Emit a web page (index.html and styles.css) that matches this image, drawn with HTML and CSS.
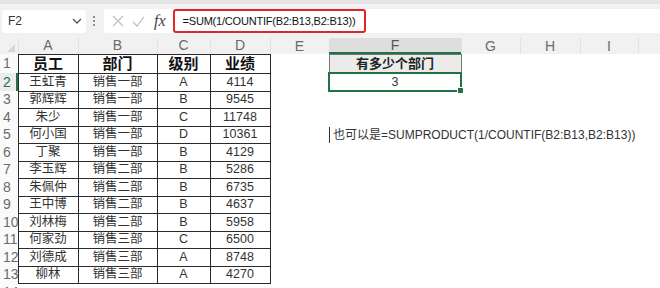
FILE: index.html
```html
<!DOCTYPE html>
<html lang="zh-CN">
<head>
  <meta charset="UTF-8" />
  <title>Sheet</title>
  <link rel="stylesheet" href="styles.css">
</head>
<body>

<div class="topstrip"></div>

<div class="bar">
  <div class="namebox">
    <span>F2</span>
    <svg class="chev" width="10" height="6" viewBox="0 0 10 6"><path d="M1 1 L5 5 L9 1" fill="none" stroke="#555" stroke-width="1.3"/></svg>
  </div>
  <svg class="dots" width="4" height="12" viewBox="0 0 4 12"><circle cx="2" cy="2" r="1.1" fill="#777"/><circle cx="2" cy="6" r="1.1" fill="#777"/><circle cx="2" cy="10" r="1.1" fill="#777"/></svg>
  <div class="formula">
    <svg class="ico" width="12" height="12" viewBox="0 0 12 12"><path d="M1 1 L11 11 M11 1 L1 11" stroke="#bdbdbd" stroke-width="1.2"/></svg>
    <svg class="ico" width="13" height="11" viewBox="0 0 13 11"><path d="M1 6 L5 10 L12 1" fill="none" stroke="#bdbdbd" stroke-width="1.2"/></svg>
    <span class="fx">fx</span>
    <span class="ftext">=SUM(1/COUNTIF(B2:B13,B2:B13))</span>
  </div>
</div>

<table class="sheet">
  <colgroup>
    <col style="width:18px"><col style="width:60px"><col style="width:79px"><col style="width:53px"><col style="width:60px">
    <col style="width:59px"><col style="width:132px"><col style="width:59px"><col style="width:60px"><col style="width:58px"><col style="width:40px">
  </colgroup>
  <tr class="colhead">
    <th class="corner"><span class="tri"></span></th>
    <th>A</th><th>B</th><th>C</th><th>D</th><th>E</th><th class="sel">F</th><th>G</th><th>H</th><th>I</th><th></th>
  </tr>
  <tr class="r1">
    <td class="rn">1</td>
    <td class="b hd">员工</td><td class="b hd">部门</td><td class="b hd">级别</td><td class="b hd">业绩</td>
    <td></td><td class="f1">有多少个部门</td><td></td><td></td><td></td><td></td>
  </tr>
  <tr>
    <td class="rn rsel">2</td>
    <td class="b">王虹青</td><td class="b">销售一部</td><td class="b">A</td><td class="b">4114</td>
    <td></td><td class="f2">3</td><td></td><td></td><td></td><td></td>
  </tr>
  <tr><td class="rn">3</td><td class="b">郭辉辉</td><td class="b">销售一部</td><td class="b">B</td><td class="b">9545</td><td colspan="6"></td></tr>
  <tr><td class="rn">4</td><td class="b">朱少</td><td class="b">销售一部</td><td class="b">C</td><td class="b">11748</td><td colspan="6"></td></tr>
  <tr>
    <td class="rn">5</td><td class="b">何小国</td><td class="b">销售一部</td><td class="b">D</td><td class="b">10361</td>
    <td></td><td class="note"><span class="cursor">也可以是=SUMPRODUCT(1/COUNTIF(B2:B13,B2:B13))</span></td><td colspan="4"></td>
  </tr>
  <tr><td class="rn">6</td><td class="b">丁聚</td><td class="b">销售一部</td><td class="b">B</td><td class="b">4129</td><td colspan="6"></td></tr>
  <tr><td class="rn">7</td><td class="b">李玉辉</td><td class="b">销售二部</td><td class="b">B</td><td class="b">5286</td><td colspan="6"></td></tr>
  <tr><td class="rn">8</td><td class="b">朱佩仲</td><td class="b">销售二部</td><td class="b">B</td><td class="b">6735</td><td colspan="6"></td></tr>
  <tr><td class="rn">9</td><td class="b">王中博</td><td class="b">销售二部</td><td class="b">B</td><td class="b">4637</td><td colspan="6"></td></tr>
  <tr><td class="rn">10</td><td class="b">刘林梅</td><td class="b">销售二部</td><td class="b">B</td><td class="b">5958</td><td colspan="6"></td></tr>
  <tr><td class="rn">11</td><td class="b">何家劲</td><td class="b">销售三部</td><td class="b">C</td><td class="b">6500</td><td colspan="6"></td></tr>
  <tr><td class="rn">12</td><td class="b">刘德成</td><td class="b">销售三部</td><td class="b">A</td><td class="b">8748</td><td colspan="6"></td></tr>
  <tr><td class="rn">13</td><td class="b">柳林</td><td class="b">销售三部</td><td class="b">A</td><td class="b">4270</td><td colspan="6"></td></tr>
  <tr><td class="rn">14</td><td colspan="10"></td></tr>
</table>

</body>
</html>
```

FILE: styles.css
```css
body {
  margin: 0;
  width: 660px;
  height: 288px;
  overflow: hidden;
  background: #fff;
  font-family: "Liberation Sans", "Noto Sans CJK SC", sans-serif;
  color: #222;
}

.topstrip {
  height: 4px;
  background: #e4e4e4;
}

.bar {
  display: flex;
  align-items: center;
  height: 34px;
  background: #f1f1f1;
}

.namebox {
  display: flex;
  align-items: center;
  justify-content: space-between;
  box-sizing: border-box;
  width: 84px;
  height: 23px;
  margin-left: 2px;
  padding: 0 4px 0 6px;
  background: #fff;
  border-radius: 3px;
  font-size: 12px;
  color: #333;
}

.dots {
  margin: 0 8px 0 6px;
}

.formula {
  flex: 1;
  display: flex;
  align-items: center;
  height: 24px;
  padding-left: 4px;
  background: #fff;
  border-radius: 3px 0 0 3px;
}

.ico {
  margin-left: 4px;
  margin-right: 4px;
}

.fx {
  margin-left: 5px;
  margin-right: 7px;
  font-family: "Liberation Serif", serif;
  font-style: italic;
  font-size: 16px;
  color: #444;
}

.ftext {
  box-sizing: border-box;
  width: 193px;
  height: 24px;
  line-height: 20px;
  padding-left: 8px;
  border: 2px solid #e0262a;
  border-radius: 3px;
  font-size: 11px;
  letter-spacing: -0.2px;
  color: #111;
  white-space: nowrap;
  overflow: hidden;
}

.sheet {
  table-layout: fixed;
  border-collapse: collapse;
  width: 678px;
  font-size: 12.5px;
  line-height: 13px;
}

.sheet tr {
  height: 17px;
}

.sheet tr:nth-child(odd) {
  height: 18px;
}

.sheet td,
.sheet th {
  box-sizing: border-box;
  padding: 0;
  text-align: center;
  vertical-align: middle;
  white-space: nowrap;
  overflow: visible;
}

.sheet tr.colhead {
  height: 16px;
}

.colhead th {
  background: #f1f1f1;
  font-weight: normal;
  font-size: 14px;
  line-height: 13px;
  color: #6a6a6a;
  box-shadow: inset 1px 0 0 #e2e2e2;
}

.colhead th.corner {
  box-shadow: none;
  position: relative;
}

.tri {
  position: absolute;
  right: 3px;
  bottom: 2px;
  width: 0;
  height: 0;
  border-left: 8px solid transparent;
  border-bottom: 8px solid #d6d6d6;
}

.colhead th.sel {
  background: #dedede;
  box-shadow: inset 0 -2px 0 #217346;
  color: #555;
}

.rn {
  text-align: left !important;
  padding-left: 3px !important;
  font-size: 14px;
  color: #6a6a6a;
  background: #fafafa;
}

.rsel {
  color: #217346;
  background: #ececec;
  box-shadow: inset -2px 0 0 #217346;
}

.sheet tr.r1 {
  height: 19px;
}

.b {
  border: 1px solid #2a2a2a;
  color: #333;
}

.hd {
  font-size: 15px;
  font-weight: bold;
  color: #111;
}

.f1 {
  background: #ebebeb;
  border: 1px solid #6d7d72;
  font-size: 13px;
  font-weight: bold;
  color: #222;
}

.f2 {
  position: relative;
  outline: 2px solid #217346;
  outline-offset: -1px;
  color: #333;
}

.f2::after {
  content: "";
  position: absolute;
  right: -3px;
  bottom: -3px;
  width: 5px;
  height: 5px;
  background: #217346;
  border: 1px solid #fff;
}

.note {
  text-align: left !important;
  vertical-align: bottom !important;
}

.cursor {
  display: inline-block;
  padding-left: 3px;
  border-left: 1px solid #333;
  font-size: 12px;
  line-height: 16px;
  color: #333;
}
```
